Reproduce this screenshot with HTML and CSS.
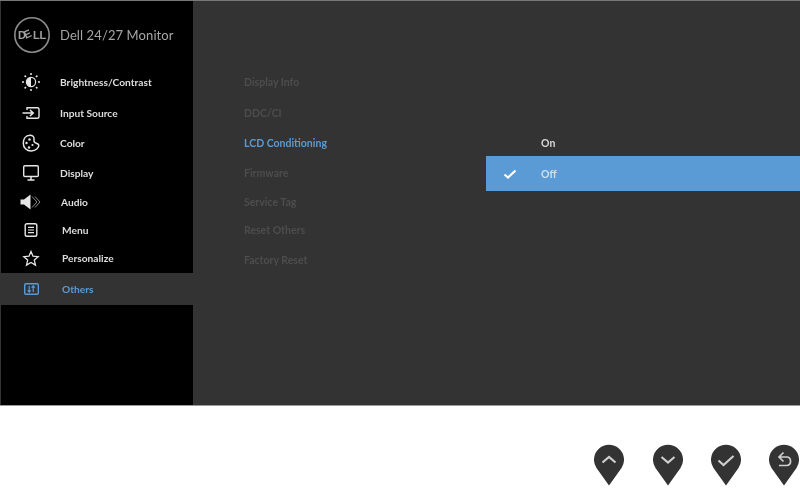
FILE: index.html
```html
<!DOCTYPE html>
<html>

<head>
	<title>Dell 24/27 Monitor</title>
	<link rel="stylesheet" href="styles.css">
</head>

<body>
	<div class="screen">
		<div class="sidebar">
			<div class="brand">
				<svg class="logo" width="38" height="38" viewBox="0 0 38 38">
					<circle cx="19" cy="19" r="17.2" fill="none" stroke="#8c8c8c" stroke-width="1.6" />
					<text x="19" y="23" text-anchor="middle" rotate="0 -25 0 0" class="logo-text">DELL</text>
				</svg>
				<span class="brand-name">Dell 24/27 Monitor</span>
			</div>
			<ul class="menu">
				<li class="menu-item">
					<svg class="icon" viewBox="0 0 22 22">
						<circle cx="11" cy="11" r="4.6" fill="none" stroke="#e6e6e6" stroke-width="1.2" />
						<path d="M11 6.4a4.6 4.6 0 0 0 0 9.2z" fill="#e6e6e6" />
						<path d="M11 2v2M11 18v2M2 11h2M18 11h2M4.600 4.600l1.400 1.400M16 16l1.400 1.400M4.600 17.400L6 16M16 6l1.400-1.400" stroke="#e6e6e6" stroke-width="1.500" />
					</svg>
					<span>Brightness/Contrast</span>
				</li>
				<li class="menu-item">
					<svg class="icon" viewBox="0 0 22 22">
						<path d="M7 8V5.700h10.500a1.500 1.500 0 0 1 1.500 1.500v7.600a1.500 1.500 0 0 1-1.500 1.500H7V14" fill="none" stroke="#e6e6e6" stroke-width="1.400" />
						<path d="M2.500 11h10.500M10 8l3.200 3-3.200 3" fill="none" stroke="#e6e6e6" stroke-width="1.600" />
					</svg>
					<span>Input Source</span>
				</li>
				<li class="menu-item">
					<svg class="icon" viewBox="0 0 22 22">
						<path d="M10 3.200c2.500 0 4.200 1.600 4 3.600-.2 1.600-.4 3 1 3.900 1 .7 3.500.8 3.800 2.500.3 2.500-3 5.800-7.500 5.800-4.800 0-8-3.500-8-7.800S5.500 3.200 10 3.200z" fill="none" stroke="#e6e6e6" stroke-width="1.500" />
						<circle cx="9.500" cy="7.500" r="1.200" fill="#e6e6e6" />
						<circle cx="6.500" cy="11" r="1.200" fill="#e6e6e6" />
						<circle cx="9" cy="15.500" r="1.200" fill="#e6e6e6" />
						<circle cx="12.500" cy="13" r="1.100" fill="#e6e6e6" />
					</svg>
					<span>Color</span>
				</li>
				<li class="menu-item">
					<svg class="icon" viewBox="0 0 22 22">
						<rect x="3.700" y="3.700" width="14.600" height="10.800" rx="1.200" fill="none" stroke="#e6e6e6" stroke-width="1.400" />
						<path d="M11 14.500v3M7.500 18h7" stroke="#e6e6e6" stroke-width="1.500" />
					</svg>
					<span>Display</span>
				</li>
				<li class="menu-item shift-1">
					<svg class="icon" viewBox="0 0 22 22">
						<path d="M0.500 8.500h3.500l6.500-5v15l-6.500-5H0.500z" fill="#e6e6e6" />
						<path d="M12 5.500l5 5.500-5 5.500M15 5.500l5 5.500-5 5.500" fill="none" stroke="#8c8c8c" stroke-width="1" />
					</svg>
					<span>Audio</span>
				</li>
				<li class="menu-item shift-2">
					<svg class="icon" viewBox="0 0 22 22">
						<rect x="5.200" y="4.700" width="11.600" height="12.600" rx="1.800" fill="none" stroke="#e6e6e6" stroke-width="1.400" />
						<path d="M8 8.300h6M8 11h6M8 13.700h6" stroke="#e6e6e6" stroke-width="1.200" />
					</svg>
					<span>Menu</span>
				</li>
				<li class="menu-item shift-2">
					<svg class="icon" viewBox="0 0 22 22">
						<path d="M11 4.500l2 4.700 5.200.5-3.900 3.400 1.200 5-4.500-2.600-4.500 2.600 1.200-5-3.900-3.400 5.200-.5z" fill="none" stroke="#e6e6e6" stroke-width="1.300" />
					</svg>
					<span>Personalize</span>
				</li>
				<li class="menu-item shift-2 active">
					<svg class="icon" viewBox="0 0 22 22">
						<rect x="4.700" y="5.700" width="13.600" height="10.600" rx="1.200" fill="none" stroke="#5b9bd5" stroke-width="1.400" />
						<path d="M9.200 8v6M7.600 12.300l1.600 1.700 1.600-1.700M13.200 14V8M11.600 9.700L13.200 8l1.600 1.700" fill="none" stroke="#5b9bd5" stroke-width="1.200" />
					</svg>
					<span>Others</span>
				</li>
			</ul>
		</div>
		<div class="panel">
			<ul class="submenu">
				<li>Display Info</li>
				<li>DDC/CI</li>
				<li class="current">LCD Conditioning</li>
				<li>Firmware</li>
				<li>Service Tag</li>
				<li>Reset Others</li>
				<li>Factory Reset</li>
			</ul>
			<div class="options">
				<div class="option on">On</div>
				<div class="option selected">
					<svg class="check" width="14" height="10" viewBox="0 0 14 10">
						<path d="M1.500 5.500l3.500 3 7.500-7" fill="none" stroke="#fff" stroke-width="2.200" />
					</svg>
					<span>Off</span>
				</div>
			</div>
		</div>
	</div>
	<div class="buttons">
		<svg class="pin" viewBox="0 0 30 42">
			<path d="M15 41.500L2.500 24A15 15 0 1 1 27.500 24z" />
			<path class="glyph" d="M8.500 18.500l6.500-5.500 6.500 5.500" />
		</svg>
		<svg class="pin" viewBox="0 0 30 42">
			<path d="M15 41.500L2.500 24A15 15 0 1 1 27.500 24z" />
			<path class="glyph" d="M8.500 13l6.500 5.500 6.500-5.500" />
		</svg>
		<svg class="pin" viewBox="0 0 30 42">
			<path d="M15 41.500L2.500 24A15 15 0 1 1 27.500 24z" />
			<path class="glyph" d="M7.500 16.500l5 4.500 10-9" />
		</svg>
		<svg class="pin" viewBox="0 0 30 42">
			<path d="M15 41.500L2.500 24A15 15 0 1 1 27.500 24z" />
			<path class="glyph thin" d="M14.500 8.500L10 13l4.500 4.500M10 13h8a3.500 3.500 0 0 1 3.500 3.500v1.500A3.500 3.500 0 0 1 18 21.500H10" />
		</svg>
	</div>
</body>

</html>
```

FILE: styles.css
```css
* {
	box-sizing: border-box;
}

html,
body {
	margin: 0;
	height: 488px;
	overflow: hidden;
	background-color: #fff;
	font-family: Lato, Arial, sans-serif;
}

ul {
	list-style: none;
	margin: 0;
	padding: 0;
}

.screen {
	display: flex;
	height: 406px;
	padding-left: 1px;
	background-color: #333334;
	border-top: 1px solid #777;
	border-bottom: 1px solid #999;
	filter: blur(0.45px);
}

.sidebar {
	width: 192px;
	background-color: #000;
}

.brand {
	display: flex;
	align-items: center;
	height: 66px;
	padding: 2px 0 0 12px;
}

.logo-text {
	font-family: "Liberation Sans", Arial, sans-serif;
	font-size: 11px;
	font-weight: 700;
	letter-spacing: -0.2px;
	fill: #a0a0a0;
}

.brand-name {
	margin-left: 9px;
	font-size: 13px;
	letter-spacing: 0.1px;
	color: #a6a6a6;
}

.menu {
	display: grid;
	grid-template-rows: 30px 31px 30px 30px 28px 27px 30px 32px;
}

.menu-item {
	display: flex;
	align-items: center;
	font-size: 10.2px;
	font-weight: 700;
	color: #dedede;
}

.icon {
	width: 22px;
	height: 22px;
	margin: 0 18px 0 19px;
	flex: none;
}

.shift-1 span {
	margin-left: 1px;
}

.shift-2 span {
	margin-left: 2px;
}

.active {
	background-color: #333334;
	color: #5b9bd5;
}

.panel {
	display: flex;
	flex: 1;
}

.submenu {
	display: grid;
	grid-template-rows: 30px 31px 30px 30px 28px 28px 31px;
	align-content: start;
	width: 293px;
	padding: 66px 0 0 51px;
	font-size: 10.5px;
	font-weight: 700;
	color: #4d4d4d;
}

.submenu li {
	display: flex;
	align-items: center;
}

.submenu .current {
	color: #5b9bd5;
}

.options {
	flex: 1;
	padding-top: 128px;
	font-size: 10.5px;
	font-weight: 700;
	color: #d8d8d8;
}

.option {
	display: flex;
	align-items: center;
	padding-left: 55px;
}

.on {
	height: 27px;
}

.selected {
	position: relative;
	height: 35px;
	background-color: #5b9bd5;
	color: #cfdfee;
}

.check {
	position: absolute;
	left: 17px;
	top: 13px;
}

.buttons {
	display: flex;
	justify-content: flex-end;
	gap: 28.3px;
	padding: 38px 0.7px 0 0;
}

.pin {
	width: 30px;
	height: 42px;
	fill: #333334;
}

.glyph {
	fill: none;
	stroke: #cfcfcf;
	stroke-width: 2.2;
}

.glyph.thin {
	stroke-width: 1.7;
}
```
